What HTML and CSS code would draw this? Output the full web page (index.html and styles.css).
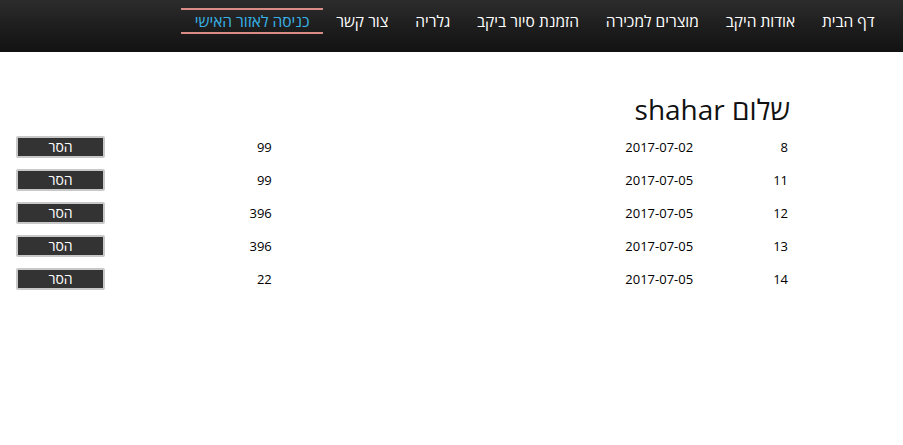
FILE: index.html
```html
<!DOCTYPE html>
<html lang="he" dir="rtl">
<head>
<meta charset="utf-8">
<link rel="stylesheet" href="styles.css">
</head>
<body>
<header class="topbar">
  <nav class="nav">
    <a class="nav-item">דף הבית</a>
    <a class="nav-item">אודות היקב</a>
    <a class="nav-item">מוצרים למכירה</a>
    <a class="nav-item">הזמנת סיור ביקב</a>
    <a class="nav-item">גלריה</a>
    <a class="nav-item">צור קשר</a>
    <a class="nav-item active">כניסה לאזור האישי</a>
  </nav>
</header>
<main class="content">
  <h1 class="greeting">שלום shahar</h1>
  <table class="orders">
    <tr><td class="c-id">8</td><td class="c-date">2017-07-02</td><td class="c-price">99</td><td class="c-btn"><button class="remove">הסר</button></td></tr>
    <tr><td class="c-id">11</td><td class="c-date">2017-07-05</td><td class="c-price">99</td><td class="c-btn"><button class="remove">הסר</button></td></tr>
    <tr><td class="c-id">12</td><td class="c-date">2017-07-05</td><td class="c-price">396</td><td class="c-btn"><button class="remove">הסר</button></td></tr>
    <tr><td class="c-id">13</td><td class="c-date">2017-07-05</td><td class="c-price">396</td><td class="c-btn"><button class="remove">הסר</button></td></tr>
    <tr><td class="c-id">14</td><td class="c-date">2017-07-05</td><td class="c-price">22</td><td class="c-btn"><button class="remove">הסר</button></td></tr>
  </table>
</main>
</body>
</html>
```
FILE: styles.css
```css
html, body {
  margin: 0;
  padding: 0;
  background: #fff;
  font-family: "Open Sans", "DejaVu Sans", sans-serif;
  color: #111;
}
.topbar {
  height: 52px;
  background: linear-gradient(to bottom, #2c2c2c 0%, #1e1e1e 50%, #121212 100%);
  display: flex;
  justify-content: flex-start;
}
.nav {
  display: flex;
  align-items: flex-start;
  padding-right: 15px;
  padding-top: 8px;
}
.nav-item {
  color: #fff;
  font-size: 15.5px;
  line-height: 22px;
  padding: 0 13.4px;
  border-top: 2px solid transparent;
  border-bottom: 2px solid transparent;
  white-space: nowrap;
  cursor: pointer;
}
.nav-item.active {
  color: #38b3e8;
  border-top-color: #d98c86;
  border-bottom-color: #d98c86;
}
.content {
  padding: 38px 113px 0 16px;
}
.greeting {
  font-size: 28px;
  font-weight: normal;
  margin: 0 0 2px 0;
  line-height: 38px;
  color: #111;
}
.orders {
  border-collapse: collapse;
  width: 774px;
  font-size: 13px;
  color: #000;
}
.orders td {
  height: 33px;
  padding: 0 2px;
  text-align: right;
  vertical-align: middle;
}
.orders td.c-btn { padding-left: 0; }
.c-id { width: 91px; }
.c-date { width: 418px; }
.c-price { width: 163px; }
.c-btn { width: 88px; }
.remove {
  width: 89px;
  height: 22px;
  background: #333;
  color: #fff;
  border: 2px solid #c8c8c8;
  border-radius: 2px;
  font-family: "Open Sans", "DejaVu Sans", sans-serif;
  font-size: 14px;
  line-height: 16px;
  padding: 0;
  display: block;
}
```
